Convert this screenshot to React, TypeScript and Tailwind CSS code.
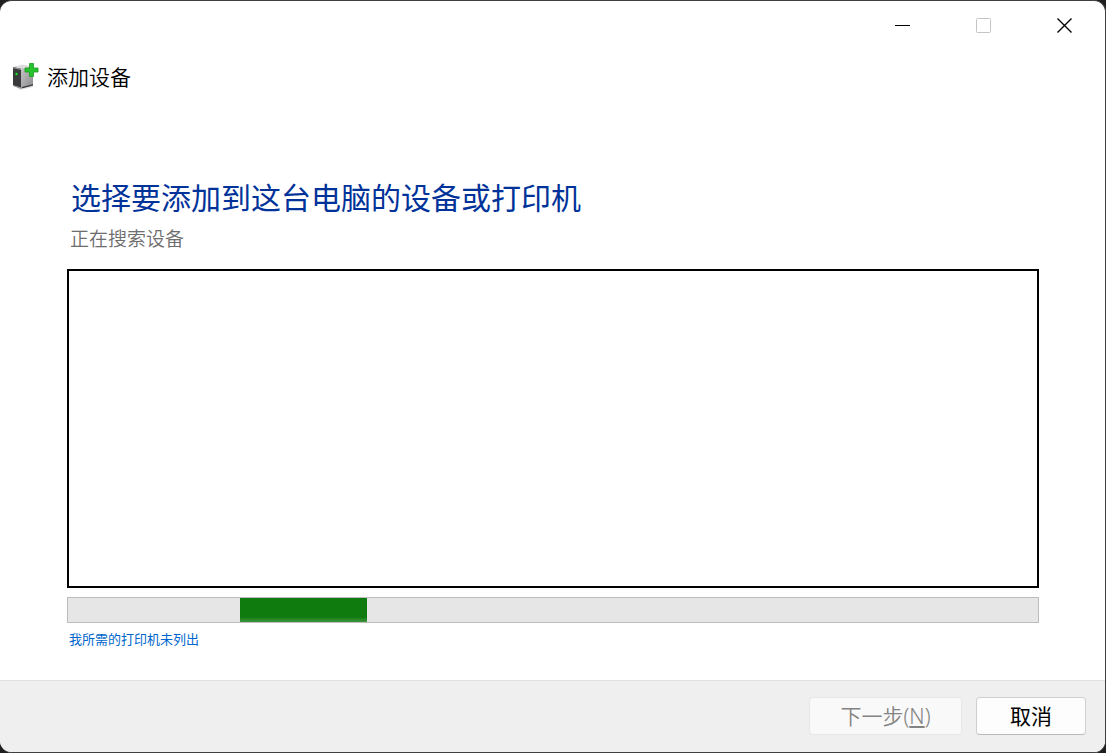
import { ReactNode } from "react";

interface CaptionButtonProps {
  label: string;
  disabled?: boolean;
  children: ReactNode;
}

const PROGRESS = { start: 172, length: 127, track: 970 };

function CaptionButton({ label, disabled, children }: CaptionButtonProps) {
  return (
    <button
      type="button"
      aria-label={label}
      disabled={disabled}
      className="flex h-full w-[81px] items-center justify-center text-black enabled:hover:bg-black/5 disabled:text-[#c4c4c4]"
    >
      <svg width="17" height="17" viewBox="0 0 17 17" fill="none" stroke="currentColor" aria-hidden="true">
        {children}
      </svg>
    </button>
  );
}

function DeviceIcon() {
  return (
    <svg width="27" height="27" viewBox="0 0 27 27" aria-hidden="true">
      <defs>
        <linearGradient id="side" x1="0" y1="0" x2="1" y2="1">
          <stop offset="0" stopColor="#c6c6c8" />
          <stop offset="1" stopColor="#8a8a8c" />
        </linearGradient>
      </defs>
      <path d="M2 23l6 4 13-3v-2z" fill="#c9c9c9" opacity="0.6" />
      <path d="M1 4l9-2.500 11 2-12 2.200z" fill="#dcdcde" />
      <path d="M9 5.500l12-2V22.500L9 25.500z" fill="url(#side)" />
      <path d="M1 4l8 1.700v19.800L1 22.800z" fill="#3a3a3c" />
      <path d="M1 4l8 1.700v1.200L1 5.200z" fill="#8d8d8f" />
      <path d="M1 22l8 2.500v1L1 22.800z" fill="#a6a6a8" />
      <path d="M10 24l11-2.700v1.200L9.500 25.500z" fill="#39393b" />
      <circle cx="4.500" cy="11" r="1.800" fill="#1d6b22" />
      <circle cx="4.500" cy="11" r="1" fill="#2ef03c" />
      <path
        d="M17.500.5h4v4.500h4.500v4h-4.500v4.500h-4V9H13V5h4.500z"
        fill="#27c32f"
        stroke="#179a20"
        strokeWidth="0.8"
      />
    </svg>
  );
}

export default function App() {
  return (
    <div className="flex min-h-screen bg-[#1f1f1f] font-['Noto_Sans_CJK_SC','Noto_Sans',sans-serif]">
      <div className="flex flex-1 flex-col overflow-hidden rounded-xl border-t border-r border-b border-[#3f3f3f] bg-white">
        {/* Caption buttons */}
        <div className="flex h-[49px] justify-end">
          <CaptionButton label="最小化">
            <path d="M1 8.500h15" />
          </CaptionButton>
          <CaptionButton label="最大化" disabled>
            <rect x="1.500" y="1.500" width="14" height="14" rx="1" />
          </CaptionButton>
          <CaptionButton label="关闭">
            <path d="M1.500 1.500l14 14M15.500 1.500l-14 14" strokeWidth="1.400" />
          </CaptionButton>
        </div>

        <header className="flex h-[52px] items-center gap-2 px-3">
          <DeviceIcon />
          <h1 className="text-[21px] leading-7 font-[350] text-black">添加设备</h1>
        </header>

        <main className="flex flex-1 flex-col pt-[74px] pr-[66px] pb-[31px] pl-[67px]">
          <h2 className="px-1 text-[30px] leading-10 text-[#003399]">选择要添加到这台电脑的设备或打印机</h2>
          <p className="mt-2.5 px-[3px] text-[19px] leading-6 font-[350] text-[#6d6d6d]">正在搜索设备</p>

          <div role="listbox" aria-label="设备" className="mt-[19px] flex-1 border-2 border-black bg-white" />

          <div
            role="progressbar"
            aria-label="正在搜索设备"
            className="mt-[9px] h-[26px] border border-[#bcbcbc] bg-[#e6e6e6]"
          >
            <div
              className="h-full bg-linear-to-b from-[#0f7b0f] from-80% to-[#3c963c]"
              style={{
                marginLeft: `${(PROGRESS.start / PROGRESS.track) * 100}%`,
                width: `${(PROGRESS.length / PROGRESS.track) * 100}%`,
              }}
            />
          </div>

          <a href="#manual" className="mt-1.5 self-start px-0.5 text-[13px] leading-5 text-[#0066cc] hover:underline">
            我所需的打印机未列出
          </a>
        </main>

        <footer className="flex justify-end gap-3.5 border-t border-[#dfdfdf] bg-[#efefef] px-[19px] pt-4 pb-[17px] font-['Noto_Sans','Noto_Sans_CJK_SC',sans-serif] text-[21px] leading-7">
          <button
            type="button"
            disabled
            className="h-[38px] w-[153px] rounded border border-[#e8e8e8] bg-[#f9f9f9] font-[350] text-[#838383]"
          >
            下一步(<span className="underline underline-offset-2">N</span>)
          </button>
          <button
            type="button"
            className="h-[38px] w-[110px] rounded border border-[#d0d0d0] border-b-[#bababa] bg-[#fdfdfd] text-black hover:bg-[#f5f5f5]"
          >
            取消
          </button>
        </footer>
      </div>
    </div>
  );
}
